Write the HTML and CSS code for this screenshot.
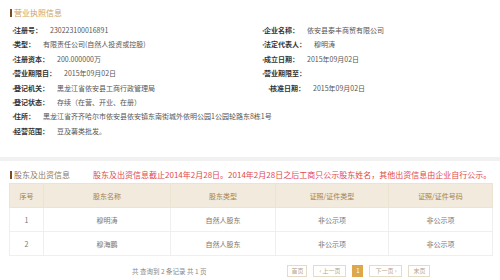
FILE: index.html
```html
<!DOCTYPE html>
<html lang="zh-CN">
<head>
    <meta charset="UTF-8">
    <title>营业执照信息</title>
    <link rel="stylesheet" href="styles.css">
</head>
<body>
    <div class="panel">
        <h2 class="title title-license">营业执照信息</h2>
        <div class="info">
            <div class="item"><b>注册号：</b><span>230223100016891</span></div>
            <div class="item"><b>企业名称：</b><span>依安县泰丰商贸有限公司</span></div>
            <div class="item"><b>类型：</b><span>有限责任公司(自然人投资或控股)</span></div>
            <div class="item"><b>法定代表人：</b><span>穆明涛</span></div>
            <div class="item"><b>注册资本：</b><span>200.000000万</span></div>
            <div class="item"><b>成立日期：</b><span>2015年09月02日</span></div>
            <div class="item"><b>营业期限自：</b><span>2015年09月02日</span></div>
            <div class="item"><b>营业期限至：</b><span></span></div>
            <div class="item"><b>登记机关：</b><span>黑龙江省依安县工商行政管理局</span></div>
            <div class="item item-shift"><b>核准日期：</b><span>2015年09月02日</span></div>
            <div class="item"><b>登记状态：</b><span>存续（在营、开业、在册）</span></div>
            <div class="blank"></div>
            <div class="item wide"><b>住所：</b><span>黑龙江省齐齐哈尔市依安县依安镇东南街城外依明公园1公园轮路东8栋1号</span></div>
            <div class="item wide"><b>经营范围：</b><span>豆及薯类批发。</span></div>
        </div>
    </div>

    <div class="divider"></div>

    <div class="panel panel-holders">
        <div class="title-row">
            <h2 class="title title-holders">股东及出资信息</h2>
            <p class="notice">股东及出资信息截止2014年2月28日。2014年2月28日之后工商只公示股东姓名，其他出资信息由企业自行公示。</p>
        </div>
        <table class="holders">
            <thead>
                <tr>
                    <th class="c-no">序号</th>
                    <th class="c-name">股东名称</th>
                    <th class="c-type">股东类型</th>
                    <th class="c-doc">证照/证件类型</th>
                    <th class="c-num">证照/证件号码</th>
                </tr>
            </thead>
            <tbody>
                <tr>
                    <td>1</td>
                    <td>穆明涛</td>
                    <td>自然人股东</td>
                    <td>非公示项</td>
                    <td>非公示项</td>
                </tr>
                <tr>
                    <td>2</td>
                    <td>穆海鹏</td>
                    <td>自然人股东</td>
                    <td>非公示项</td>
                    <td>非公示项</td>
                </tr>
            </tbody>
        </table>
        <div class="pager">
            <span class="total">共 查询到 2 条记录 共 1 页</span>
            <div class="pages">
                <a class="btn btn-first">首页</a>
                <a class="btn btn-prev">‹ 上一页</a>
                <a class="btn active">1</a>
                <a class="btn btn-next">下一页 ›</a>
                <a class="btn btn-last">末页</a>
            </div>
        </div>
    </div>
</body>
</html>
```

FILE: styles.css
```css
body {
    margin: 0;
    background: #fff;
    font-family: "Noto Sans CJK SC", "Liberation Sans", sans-serif;
    color: #555;
}
.panel {
    padding: 7px 0 0 10px;
    height: 150px;
}
.title {
    margin: 0;
    font-size: 8px;
    font-weight: normal;
    line-height: 12px;
    display: flex;
    align-items: center;
}
.title::before {
    content: "";
    display: inline-block;
    width: 2px;
    height: 8px;
    margin-right: 2px;
    background: #7a4c22;
}
.title-license {
    color: #cf9f62;
}
.title-holders {
    color: #8d7a62;
}
.info {
    display: grid;
    grid-template-columns: 250px 1fr;
    grid-auto-rows: 14.4px;
    margin-top: 4px;
    font-size: 7px;
    line-height: 14.4px;
}
.item {
    white-space: nowrap;
}
.item::before {
    content: "·";
    display: inline-block;
    width: 4px;
    color: #888;
    font-weight: bold;
}
.item b {
    color: #333;
    font-weight: bold;
    margin-right: 8px;
}
.item span {
    color: #555;
}
.item-shift {
    padding-left: 6px;
}
.wide {
    grid-column: 1 / 3;
}
.divider {
    height: 4px;
    background: #f1f1f1;
}
.panel-holders {
    padding: 8px 0 0 10px;
    height: auto;
}
.title-row {
    display: flex;
    align-items: center;
    height: 12px;
}
.notice {
    margin: 0 0 0 23px;
    font-size: 8px;
    line-height: 12px;
    color: #e2474b;
    white-space: nowrap;
}
.holders {
    margin: 2px 0 0 -1px;
    width: 484px;
    border-collapse: collapse;
    table-layout: fixed;
    font-size: 7px;
    line-height: 10px;
    text-align: center;
}
.holders th {
    height: 23px;
    padding: 0;
    background: #f1eadd;
    color: #a8834a;
    font-weight: normal;
    border: 1px solid #ece3d2;
}
.holders td {
    height: 23px;
    padding: 0;
    color: #777;
    border: 1px solid #efefef;
}
.c-no { width: 33px; }
.c-name { width: 126px; }
.c-type { width: 104px; }
.c-doc { width: 112px; }
.pager {
    display: flex;
    align-items: center;
    height: 12px;
    margin-top: 9px;
    font-size: 6.5px;
    line-height: 10px;
}
.total {
    margin-left: 122px;
    color: #888;
}
.pages {
    display: flex;
    gap: 6px;
    margin-left: 81px;
}
.btn {
    display: flex;
    align-items: center;
    justify-content: center;
    height: 10px;
    padding: 0 3px;
    border: 1px solid #e6dbc6;
    color: #b5a487;
    font-size: 6px;
}
.btn-first { width: 12px; }
.btn-prev { width: 25px; }
.btn-next { width: 25px; }
.btn-last { width: 14px; }
.btn.active {
    width: 3px;
    background: #dca84b;
    border-color: #dca84b;
    color: #fff;
}
```
